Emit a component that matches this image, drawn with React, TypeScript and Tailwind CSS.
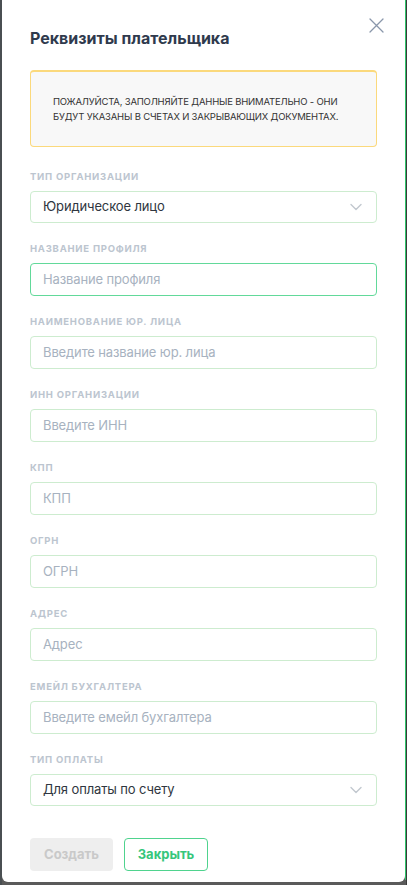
import React from 'react';

type Field = {
  label: string;
  placeholder?: string;
  value?: string;
  select?: boolean;
  focused?: boolean;
};

const fields: Field[] = [
  { label: 'Тип организации', value: 'Юридическое лицо', select: true },
  { label: 'Название профиля', placeholder: 'Название профиля', focused: true },
  { label: 'Наименование юр. лица', placeholder: 'Введите название юр. лица' },
  { label: 'ИНН организации', placeholder: 'Введите ИНН' },
  { label: 'КПП', placeholder: 'КПП' },
  { label: 'ОГРН', placeholder: 'ОГРН' },
  { label: 'Адрес', placeholder: 'Адрес' },
  { label: 'Емейл бухгалтера', placeholder: 'Введите емейл бухгалтера' },
  { label: 'Тип оплаты', value: 'Для оплаты по счету', select: true },
];

const Chevron = () => (
  <svg width="12" height="8" viewBox="0 0 12 8" fill="none" className="shrink-0">
    <path d="M1 1.5l5 5 5-5" stroke="#c2c8cf" strokeWidth="1.4" strokeLinecap="round" strokeLinejoin="round" />
  </svg>
);

const FieldRow: React.FC<{ f: Field }> = ({ f }) => (
  <div className="flex flex-col">
    <div className="text-[9.5px] leading-[12px] font-bold uppercase tracking-[0.08em] text-[#bcc5cf] mb-[8px]">
      {f.label}
    </div>
    {f.select ? (
      <div className="h-[32px] rounded-[4px] border border-[#cdeccf] flex items-center justify-between pl-[12px] pr-[14px]">
        <span className="text-[13px] text-[#2f3640] tracking-[-0.01em]">{f.value}</span>
        <Chevron />
      </div>
    ) : (
      <div
        className={`h-[33px] rounded-[4px] flex items-center pl-[12px] ${
          f.focused ? 'border border-[#62d99a]' : 'border border-[#cdeccf]'
        }`}
      >
        <span className="text-[13px] text-[#a7b2c0] tracking-[-0.01em]">{f.placeholder}</span>
      </div>
    )}
  </div>
);

export default function App() {
  return (
    <div className="w-[407px] h-[885px] bg-[#5a5a5a] flex overflow-hidden" style={{ fontFamily: 'Inter, "Noto Sans", sans-serif' }}>
      <div className="w-[2px] bg-[#4a4f52]" />
      <div className="w-[403px] h-[882px] bg-white rounded-b-[6px] relative flex flex-col px-[28px]">
        <button className="absolute right-[21px] top-[17px] w-[16px] h-[16px] flex items-center justify-center">
          <svg width="15" height="15" viewBox="0 0 15 15" fill="none">
            <path d="M1 1l13 13M14 1L1 14" stroke="#8a97ab" strokeWidth="1.3" strokeLinecap="round" />
          </svg>
        </button>
        <h2 className="mt-[27px] text-[16px] leading-[22px] font-bold text-[#2f3a4d]">
          Реквизиты плательщика
        </h2>
        <div className="mt-[21px] h-[77px] rounded-[4px] border border-[#fbd97c] border-t-2 bg-[#f8f8f8] flex flex-col justify-center pl-[22px] pr-[8px]">
          <p className="text-[9.5px] leading-[15px] text-[#333] uppercase tracking-[-0.02em] whitespace-nowrap">
            Пожалуйста, заполняйте данные внимательно - они
            <br />
            будут указаны в счетах и закрывающих документах.
          </p>
        </div>
        <div className="mt-[24px] flex flex-col gap-[20px]">
          {fields.map((f) => (
            <FieldRow key={f.label} f={f} />
          ))}
        </div>
        <div className="mt-[32px] flex gap-[11px]">
          <button className="w-[83px] h-[33px] rounded-[4px] bg-[#eeeeee] text-[13px] font-bold text-[#c9c9c9]">
            Создать
          </button>
          <button className="w-[84px] h-[33px] rounded-[4px] border border-[#4fd38e] text-[13px] font-bold text-[#35c67b]">
            Закрыть
          </button>
        </div>
      </div>
      <div className="w-[1px] h-[880px] bg-[#2fc46a]" />
      <div className="w-[1px] bg-[#3a3a3a]" />
    </div>
  );
}
